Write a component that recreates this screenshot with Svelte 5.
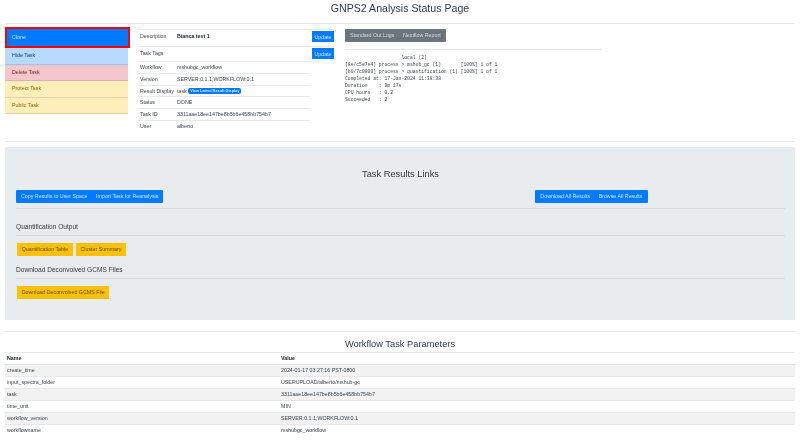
<script>
  const actions = [
    { label: "Clone", cls: "clone" },
    { label: "Hide Task", cls: "hide" },
    { label: "Delete Task", cls: "del" },
    { label: "Protect Task", cls: "warn" },
    { label: "Public Task", cls: "warn" }
  ];

  const info = [
    ["Workflow", "mshubgc_workflow"],
    ["Version", "SERVER:0.1.1;WORKFLOW:0.1"],
    ["Result Display", "task"],
    ["Status", "DONE"],
    ["Task ID", "3311aae18ee147be8b5b6e458bb754b7"],
    ["User", "alberto"]
  ];

  const params = [
    ["create_time", "2024-01-17 03:27:16 PST-0800"],
    ["input_spectra_folder", "USERUPLOAD/alberto/mshub-gc"],
    ["task", "3311aae18ee147be8b5b6e458bb754b7"],
    ["time_unit", "MIN"],
    ["workflow_version", "SERVER:0.1.1;WORKFLOW:0.1"],
    ["workflowname", "mshubgc_workflow"]
  ];

  const log = `                    local (2)
[8e/c5e7e4] process > mshub_gc (1)       [100%] 1 of 1
[b0/7c0800] process > quantification (1) [100%] 1 of 1
Completed at: 17-Jan-2024 11:38:38
Duration    : 9m 17s
CPU hours   : 0.2
Succeeded   : 2`;
</script>

<div class="page">
  <h1>GNPS2 Analysis Status Page</h1>
  <hr class="top-rule" />

  <div class="top">
    <div class="actions">
      {#each actions as a}
        <div class="action {a.cls}">{a.label}</div>
      {/each}
    </div>

    <div class="details">
      <div class="edit-row first">
        <span class="key">Description</span>
        <b class="val">Bianca test 1</b>
        <button class="btn blue update">Update</button>
      </div>
      <div class="edit-row">
        <span class="key">Task Tags</span>
        <span class="val"></span>
        <button class="btn blue update">Update</button>
      </div>
      <div class="info">
        {#each info as row}
          <div class="info-row">
            <span class="key">{row[0]}</span>
            <span class="val">
              {row[1]}
              {#if row[0] === "Result Display"}
                <span class="badge">View Latest Result Display</span>
              {/if}
            </span>
          </div>
        {/each}
      </div>
    </div>

    <div class="logs">
      <div class="group grey">
        <span>Standard Out Logs</span>
        <span>Nextflow Report</span>
      </div>
      <hr />
      <pre>{log}</pre>
    </div>
  </div>

  <hr class="band-rule" />

  <section class="panel">
    <h2>Task Results Links</h2>
    <div class="panel-bar">
      <div class="group blue">
        <span>Copy Results to User Space</span>
        <span>Import Task for Reanalysis</span>
      </div>
      <div class="group blue right">
        <span>Download All Results</span>
        <span>Browse All Results</span>
      </div>
    </div>
    <hr />
    <h3 class="quant">Quantification Output</h3>
    <hr />
    <div class="yellow-row">
      <span class="btn yellow">Quantification Table</span>
      <span class="btn yellow">Cluster Summary</span>
    </div>
    <h3 class="dec">Download Deconvolved GCMS Files</h3>
    <hr />
    <div class="yellow-row">
      <span class="btn yellow">Download Deconvolved GCMS File</span>
    </div>
  </section>

  <hr class="param-rule" />
  <h2 class="param-title">Workflow Task Parameters</h2>

  <table>
    <thead>
      <tr><th>Name</th><th>Value</th></tr>
    </thead>
    <tbody>
      {#each params as p}
        <tr><td>{p[0]}</td><td>{p[1]}</td></tr>
      {/each}
    </tbody>
  </table>
</div>

<style>
  :global(body) {
    margin: 0;
    background: #fff;
    overflow: hidden;
  }

  .page {
    width: 800px;
    height: 440px;
    overflow: hidden;
    box-sizing: border-box;
    padding: 0 5px;
    font-family: "Liberation Sans", Arial, sans-serif;
    font-size: 5.3px;
    line-height: 8px;
    color: #212529;
    filter: blur(0.45px);
  }

  hr {
    border: 0;
    border-top: 1px solid #dfe2e5;
    margin: 0;
  }

  h1 {
    margin: 0;
    padding-top: 1px;
    height: 23px;
    box-sizing: border-box;
    text-align: center;
    font-size: 10.6px;
    line-height: 15px;
    font-weight: 400;
    color: #343a40;
  }

  .top-rule {
    border-color: #e6e8ea;
  }

  .top {
    display: flex;
    height: 117px;
    padding-top: 3px;
    box-sizing: border-box;
  }

  .actions {
    width: 123px;
    flex: none;
    align-self: flex-start;
    border-radius: 1px;
  }

  .action {
    height: 16.5px;
    line-height: 15px;
    padding-left: 7px;
    box-sizing: border-box;
    border-bottom: 1px solid rgba(0, 0, 0, 0.1);
  }

  .clone {
    height: 21px;
    line-height: 17px;
    border: 2px solid #f00;
    background: #007bff;
    color: #cfe5ff;
    padding-left: 5px;
    width: 125px;
  }

  .hide {
    background: #b8daff;
    color: #004085;
  }

  .del {
    background: #f5c6cb;
    color: #721c24;
  }

  .warn {
    background: #ffeeba;
    color: #856404;
  }

  .details {
    width: 197px;
    margin-left: 10px;
    flex: none;
    padding-top: 2px;
  }

  .key {
    width: 37px;
    flex: none;
    color: #3a3f44;
  }

  .val {
    flex: 1;
    color: #3a3f44;
  }

  .edit-row {
    display: flex;
    width: 196px;
    height: 17px;
    padding: 0 0 0 2px;
    box-sizing: border-box;
    border-top: 1px solid #e6e8ea;
    align-items: flex-start;
  }

  .edit-row .key,
  .edit-row .val {
    padding-top: 2px;
  }

  .edit-row b {
    color: #212529;
  }

  .edit-row + .edit-row {
    height: 15px;
  }

  .update {
    margin-top: 1px;
    width: 22px;
    height: 11px;
    flex: none;
  }

  .info {
    width: 172px;
  }

  .info-row {
    display: flex;
    height: 11.8px;
    line-height: 11px;
    padding-left: 2px;
    border-top: 1px solid #e6e8ea;
    box-sizing: border-box;
  }

  .badge {
    display: inline-block;
    background: #007bff;
    color: #d5e8ff;
    font-size: 3.9px;
    font-weight: 700;
    line-height: 6px;
    padding: 0 2px;
    border-radius: 2px;
    vertical-align: 0.5px;
  }

  .btn {
    display: inline-block;
    border: 0;
    padding: 0;
    font: inherit;
    text-align: center;
  }

  .blue {
    background: #007bff;
    color: #cfe5ff;
  }

  .group {
    display: inline-flex;
    gap: 8.5px;
    height: 13px;
    line-height: 13px;
    padding: 0 5px;
    box-sizing: border-box;
    border-radius: 1px;
  }

  .grey {
    background: #6c757d;
    color: #d6d9dc;
  }

  .logs {
    width: 257px;
    margin-left: 10px;
    padding-top: 2px;
  }

  .logs hr {
    margin-top: 7px;
    border-color: #e6e8ea;
  }

  pre {
    margin: 4px 0 0;
    font-family: "Liberation Mono", "DejaVu Sans Mono", monospace;
    font-size: 4.72px;
    line-height: 7px;
    color: #3a3f44;
  }

  .band-rule {
    border-color: #e6e8ea;
    margin-top: 0;
  }

  .panel {
    margin-top: 5px;
    height: 173px;
    box-sizing: border-box;
    padding: 20px 10px 0 11px;
    background: #e9ecef;
  }

  .panel hr {
    border-color: #d8dbde;
  }

  h2 {
    margin: 0;
    text-align: center;
    font-weight: 400;
    font-size: 9.3px;
    line-height: 14px;
    color: #343a40;
  }

  .panel-bar {
    display: flex;
    margin-top: 9px;
    height: 13px;
  }

  .right {
    margin-left: 372px;
  }

  .panel-bar + hr {
    margin-top: 5px;
  }

  h3 {
    margin: 0;
    font-weight: 400;
    font-size: 6.6px;
    line-height: 9px;
    color: #343a40;
  }

  .quant {
    margin-top: 13px;
    margin-bottom: 4px;
  }

  .dec {
    margin-top: 9px;
    margin-bottom: 4px;
  }

  .yellow-row {
    display: flex;
    gap: 3px;
    margin: 7px 0 0 1px;
    height: 13px;
  }

  .yellow {
    background: #ffc107;
    color: #5a4a10;
    line-height: 13px;
    padding: 0 4.7px;
  }

  .param-rule {
    margin-top: 11px;
    border-color: #e6e8ea;
  }

  .param-title {
    padding-top: 2px;
    height: 20px;
    box-sizing: border-box;
    line-height: 20px;
  }

  table {
    width: 790px;
    border-collapse: collapse;
    table-layout: fixed;
    color: #3a3f44;
  }

  th,
  td {
    height: 11.9px;
    padding: 0 2px;
    line-height: 11px;
    text-align: left;
    border-top: 1px solid #e6e8ea;
    box-sizing: border-box;
  }

  th:first-child,
  td:first-child {
    width: 274px;
  }

  th {
    font-weight: 700;
    color: #212529;
    border-bottom: 1px solid #dfe2e5;
  }

  tbody tr:nth-child(odd) {
    background: #f2f2f2;
  }
</style>
